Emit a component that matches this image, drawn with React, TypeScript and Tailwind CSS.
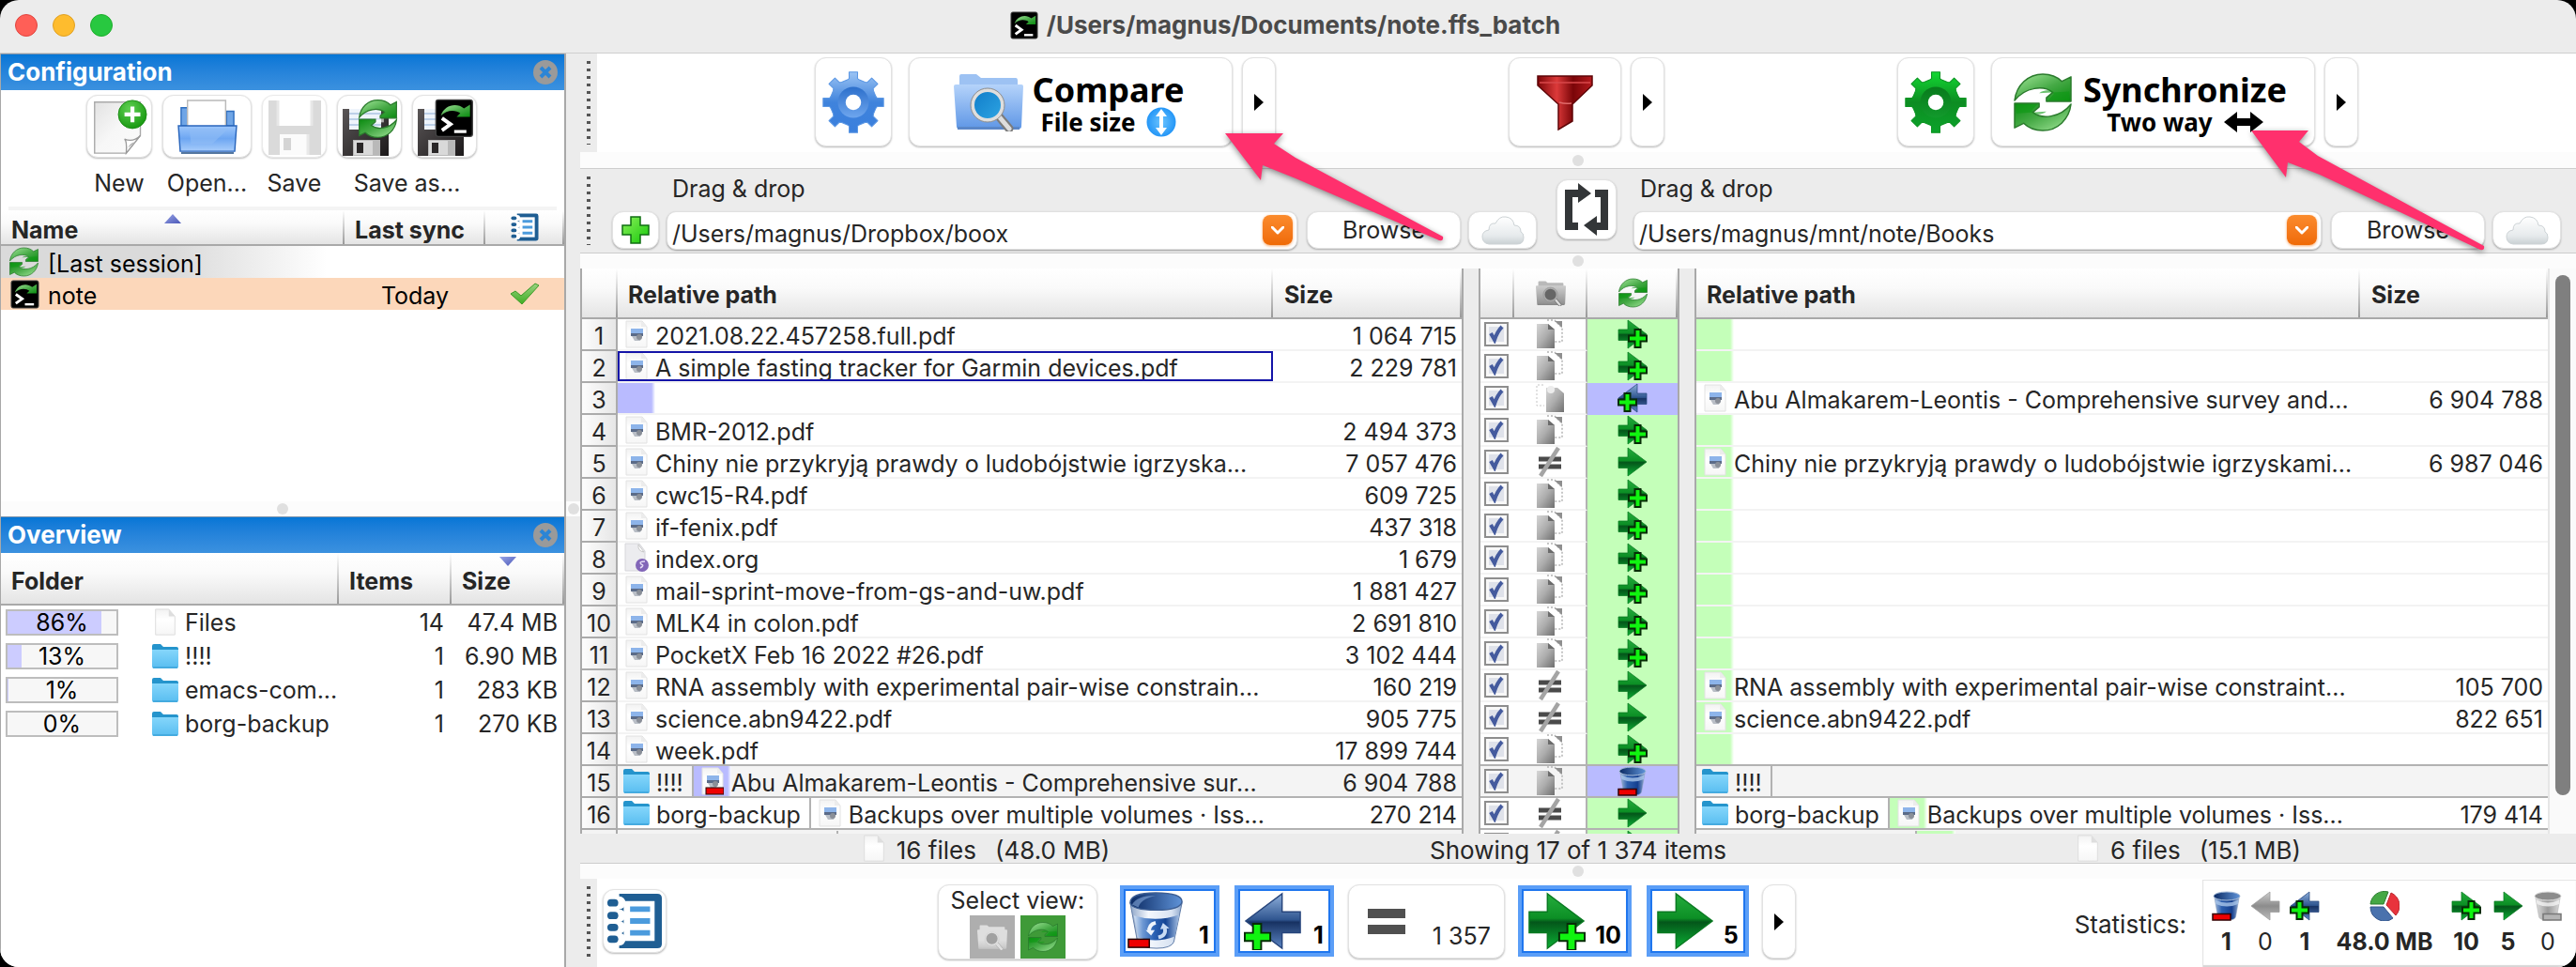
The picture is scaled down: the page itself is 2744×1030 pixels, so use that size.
import type { ReactNode } from "react";

/* ---------- icons ---------- */

function Defs() {
  return (
    <svg className="absolute h-0 w-0" aria-hidden="true">
      <defs>
        <linearGradient id="gBlueGear" x1="0" y1="0" x2="0" y2="1"><stop offset="0" stopColor="#9cc4f4" /><stop offset=".5" stopColor="#3f83dc" /><stop offset="1" stopColor="#3a7fdd" /></linearGradient>
        <linearGradient id="gBlueRing" x1="0" y1="0" x2="0" y2="1"><stop offset="0" stopColor="#2c6fcb" /><stop offset="1" stopColor="#6ea6ee" /></linearGradient>
        <linearGradient id="gGreenGear" x1="0" y1="0" x2="0" y2="1"><stop offset="0" stopColor="#12d832" /><stop offset=".5" stopColor="#0d8c22" /><stop offset="1" stopColor="#0ba32a" /></linearGradient>
        <linearGradient id="gGreenRing" x1="0" y1="0" x2="0" y2="1"><stop offset="0" stopColor="#087a1c" /><stop offset="1" stopColor="#129a2c" /></linearGradient>
        <linearGradient id="gSyncA" x1="0" y1="0" x2="1" y2="1"><stop offset="0" stopColor="#a5e89c" /><stop offset=".55" stopColor="#45a945" /><stop offset="1" stopColor="#0a8c10" /></linearGradient>
        <linearGradient id="gFolder" x1="0" y1="0" x2="0" y2="1"><stop offset="0" stopColor="#b5d3fa" /><stop offset="1" stopColor="#5f97e6" /></linearGradient>
        <linearGradient id="gFolderGrey" x1="0" y1="0" x2="0" y2="1"><stop offset="0" stopColor="#cdcdcd" /><stop offset="1" stopColor="#8f8f8f" /></linearGradient>
        <linearGradient id="gLens" x1="0" y1="0" x2="1" y2="1"><stop offset="0" stopColor="#0f7bc8" /><stop offset="1" stopColor="#2fa6e4" /></linearGradient>
        <linearGradient id="gFunnel" x1="0" y1="0" x2="1" y2="0"><stop offset="0" stopColor="#7d0508" /><stop offset=".35" stopColor="#dc3a3a" /><stop offset=".65" stopColor="#7a0508" /><stop offset="1" stopColor="#b51a1e" /></linearGradient>
        <linearGradient id="gArrow" x1="0" y1="0" x2="0" y2="1"><stop offset="0" stopColor="#25ad3d" /><stop offset=".45" stopColor="#0c8f25" /><stop offset=".52" stopColor="#04561a" /><stop offset="1" stopColor="#0bb034" /></linearGradient>
        <linearGradient id="gArrowBlue" x1="0" y1="0" x2="0" y2="1"><stop offset="0" stopColor="#8fb0dc" /><stop offset=".48" stopColor="#2f558f" /><stop offset=".52" stopColor="#173161" /><stop offset="1" stopColor="#5c86c4" /></linearGradient>
        <linearGradient id="gArrowGrey" x1="0" y1="0" x2="0" y2="1"><stop offset="0" stopColor="#cfcfcf" /><stop offset=".5" stopColor="#8c8c8c" /><stop offset="1" stopColor="#bcbcbc" /></linearGradient>
        <linearGradient id="gMacFolder" x1="0" y1="0" x2="0" y2="1"><stop offset="0" stopColor="#85d6fb" /><stop offset="1" stopColor="#58bdf0" /></linearGradient>
        <linearGradient id="gPaper" x1="0" y1="0" x2="0" y2="1"><stop offset="0" stopColor="#f2f2f2" /><stop offset=".4" stopColor="#ffffff" /><stop offset="1" stopColor="#f6f6f6" /></linearGradient>
        <linearGradient id="gGreyDoc" x1="0" y1="0" x2="1" y2="1"><stop offset="0" stopColor="#d6d6d6" /><stop offset=".5" stopColor="#adadad" /><stop offset="1" stopColor="#6f6f6f" /></linearGradient>
        <linearGradient id="gBin" x1="0" y1="0" x2="1" y2="0"><stop offset="0" stopColor="#a9bfdb" /><stop offset=".3" stopColor="#2d5fae" /><stop offset=".7" stopColor="#143f8f" /><stop offset="1" stopColor="#9fb6d6" /></linearGradient>
        <linearGradient id="gBinGlass" x1="0" y1="0" x2="1" y2="0"><stop offset="0" stopColor="#d3e1f2" /><stop offset=".2" stopColor="#6c97d3" /><stop offset=".45" stopColor="#2b62b4" /><stop offset=".7" stopColor="#154594" /><stop offset="1" stopColor="#a9c2e4" /></linearGradient>
        <linearGradient id="gBinRim" x1="0" y1="0" x2="1" y2="0"><stop offset="0" stopColor="#8fa6c8" /><stop offset=".35" stopColor="#f4f8fd" /><stop offset=".8" stopColor="#d8e3f2" /><stop offset="1" stopColor="#8ea7cc" /></linearGradient>
        <linearGradient id="gBinTop" x1="0" y1="0" x2="1" y2="0"><stop offset="0" stopColor="#0b2a63" /><stop offset="1" stopColor="#5f93d8" /></linearGradient>
        <linearGradient id="gBinGrey" x1="0" y1="0" x2="1" y2="0"><stop offset="0" stopColor="#e2e2e2" /><stop offset=".5" stopColor="#9a9a9a" /><stop offset="1" stopColor="#dedede" /></linearGradient>
        <linearGradient id="gCloud" x1="0" y1="0" x2="0" y2="1"><stop offset="0" stopColor="#ffffff" /><stop offset=".7" stopColor="#e6eaec" /><stop offset="1" stopColor="#c9d0d3" /></linearGradient>
        <linearGradient id="gOpen" x1="0" y1="0" x2="0" y2="1"><stop offset="0" stopColor="#9cc6fb" /><stop offset=".5" stopColor="#6da6f2" /><stop offset="1" stopColor="#a8cdfb" /></linearGradient>
        <linearGradient id="gDisk" x1="0" y1="0" x2="1" y2="1"><stop offset="0" stopColor="#5a5657" /><stop offset="1" stopColor="#1c191a" /></linearGradient>
        <linearGradient id="gSheet" x1="0" y1="0" x2="1" y2="1"><stop offset="0" stopColor="#e2e2e2" /><stop offset=".5" stopColor="#f7f7f7" /><stop offset="1" stopColor="#fbfbfb" /></linearGradient>
        <radialGradient id="gBadge" cx=".4" cy=".3" r=".8"><stop offset="0" stopColor="#5fd052" /><stop offset="1" stopColor="#0f9208" /></radialGradient>
        <radialGradient id="gInfo" cx=".5" cy=".5" r=".6"><stop offset="0" stopColor="#6cc4ff" /><stop offset="1" stopColor="#168df5" /></radialGradient>
        <linearGradient id="gPlus" x1="0" y1="0" x2="1" y2="1"><stop offset="0" stopColor="#8bf05a" /><stop offset="1" stopColor="#16c80a" /></linearGradient>
        <linearGradient id="gCheck" x1="0" y1="0" x2="0" y2="1"><stop offset="0" stopColor="#9ad283" /><stop offset="1" stopColor="#3fae22" /></linearGradient>
        <linearGradient id="gTri" x1="0" y1="0" x2="1" y2="1"><stop offset="0" stopColor="#9aa6e6" /><stop offset="1" stopColor="#4a57b8" /></linearGradient>
      </defs>
    </svg>
  );
}

function gearPath() {
  const pts: string[] = [];
  for (let i = 0; i < 8; i++) {
    const steps: [number, number][] = [[-15, 24], [-10, 25], [-8, 31.5], [8, 31.5], [10, 25], [15, 24]];
    for (const [deg, r] of steps) {
      const a = ((i * 45 + deg - 90) * Math.PI) / 180;
      pts.push(`${(32 + r * Math.cos(a)).toFixed(1)} ${(32 + r * Math.sin(a)).toFixed(1)}`);
    }
  }
  return `M${pts.join("L")}Z`;
}
const GEAR = gearPath();

function Gear({ green = false }: { green?: boolean }) {
  return (
    <svg viewBox="0 0 64 64" className="h-[66px] w-[66px]">
      <path d={GEAR} fill={green ? "url(#gGreenGear)" : "url(#gBlueGear)"} stroke={green ? "#0b9422" : "#5b97e4"} strokeWidth="1" strokeLinejoin="round" />
      <circle cx="32" cy="32" r="16" fill={green ? "url(#gGreenRing)" : "url(#gBlueRing)"} />
      <circle cx="32" cy="32" r="8" fill="#fff" />
    </svg>
  );
}

const SYNC_D = "M1 30C3 13 16 1 32 1C41 1 48 4 53 9L63 4V31H36V27L43 21C33 13 13 15 1 30Z";
function SyncIcon({ className }: { className: string }) {
  return (
    <svg viewBox="0 0 64 64" className={className}>
      <path d={SYNC_D} fill="url(#gSyncA)" stroke="#2a7a2c" strokeWidth="1.5" strokeLinejoin="round" />
      <path d="M28 22C36 16 44 20 44 23L38 30H61V20Z" fill="#0d9a14" opacity=".6" />
      <g transform="rotate(180 32 32)">
        <path d={SYNC_D} fill="url(#gSyncA)" stroke="#2a7a2c" strokeWidth="1.5" strokeLinejoin="round" />
        <path d="M28 22C36 16 44 20 44 23L38 30H61V20Z" fill="#0d9a14" opacity=".6" />
      </g>
    </svg>
  );
}

function TermGlyph() {
  return (
    <>
      <rect x="1" y="1" width="30" height="30" rx="2" fill="#000" stroke="#444" strokeWidth="1" />
      <path d="M5 14C8 5 18 3 24 8L29 5V15H18L21 12C17 9 10 9 5 14Z" fill="url(#gSyncA)" />
      <path d="M6 16L13 21L6 26" fill="none" stroke="#fff" strokeWidth="3" />
      <path d="M16 27H26" stroke="#fff" strokeWidth="2.5" />
    </>
  );
}
const TermIcon = ({ className }: { className: string }) => (
  <svg viewBox="0 0 32 32" className={className}><TermGlyph /></svg>
);

function FolderSearch({ className, grey = false }: { className: string; grey?: boolean }) {
  return (
    <svg viewBox="0 0 74 62" className={className}>
      <path d="M6 14V3Q6 1 8 1H24L29 5H66Q68 5 68 8V16Z" fill={grey ? "#b9b9b9" : "#9dc2f3"} />
      <path d="M0 14Q0 12 2 12H72Q74 12 74 14L72 57Q72 59 70 59H5Q3 59 3 57Z" fill={grey ? "url(#gFolderGrey)" : "url(#gFolder)"} />
      <rect x="4" y="57" width="66" height="3" fill={grey ? "#888" : "#5a87c8"} />
      <path d="M48 46L59 59" stroke="#7c7c7c" strokeWidth="9" strokeLinecap="round" />
      <path d="M48 46L59 59" stroke="#dedede" strokeWidth="5" strokeLinecap="round" />
      <circle cx="36" cy="34" r="16" fill={grey ? "#666" : "url(#gLens)"} stroke={grey ? "#aaa" : "#dedede"} strokeWidth="4" />
      <circle cx="36" cy="34" r="18" fill="none" stroke="#8d8d8d" strokeWidth="1" />
    </svg>
  );
}

const ARROW_D = "M2 22H22V2L62 32L22 62V45H2Z";
const BIG_PLUS = "M10 35h9v10h10v9h-10v10h-9v-10h-9v-9h9z";
const SMALL_PLUS = "M15 22h12v13h13v12h-13v13h-12v-13h-13v-12h13z";
type ArrowKind = "green" | "blue" | "grey";
function Arrow({ kind = "green", plus = false, small = false, className }: { kind?: ArrowKind; plus?: boolean; small?: boolean; className: string }) {
  const fill = kind === "green" ? "url(#gArrow)" : kind === "blue" ? "url(#gArrowBlue)" : "url(#gArrowGrey)";
  const stroke = kind === "green" ? "#0a7a22" : kind === "blue" ? "#27457c" : "#999";
  const x = kind === "blue" ? 0 : small ? 22 : 34;
  return (
    <svg viewBox="0 0 64 64" className={className}>
      <path d={ARROW_D} fill={fill} stroke={stroke} strokeWidth="1.5" transform={kind === "green" ? undefined : "matrix(-1 0 0 1 64 0)"} />
      {plus && <path d={small ? SMALL_PLUS : BIG_PLUS} transform={`translate(${x} 0)`} fill="#10f410" stroke="#062c06" strokeWidth={small ? 4 : 2} />}
    </svg>
  );
}

function Bin({ className }: { className: string }) {
  return (
    <svg viewBox="0 0 64 64" className={className}>
      <path d="M3 12L11 55Q15 62 32 62Q48 62 51 55L60 12Z" fill="url(#gBinRim)" stroke="#5f7ba6" strokeWidth="1" />
      <path d="M7 26Q32 34 57 25L52 49Q32 57 12 50Z" fill="url(#gBinGlass)" />
      <path d="M3 12Q3 1 31 1Q60 1 60 11Q58 20 32 20Q5 20 3 12Z" fill="url(#gBinTop)" stroke="#3d5f94" strokeWidth="1.5" />
      <path d="M5 14Q10 4 31 4Q14 8 12 17Z" fill="#8fb2e2" opacity=".55" />
      <path d="M31 34Q23 36 24 44" stroke="#eef4fc" strokeWidth="4" fill="none" />
      <path d="M20 42L30 42L26 48Z" fill="#eef4fc" />
      <path d="M34 50Q43 48 41 40" stroke="#c8dbf3" strokeWidth="4" fill="none" />
      <path d="M36 41L46 40L39 34Z" fill="#c8dbf3" />
      <rect x="1" y="52" width="23" height="9" fill="#ee0000" stroke="#200" strokeWidth="1.5" />
    </svg>
  );
}

function SmallBin({ grey = false, className = "" }: { grey?: boolean; className?: string }) {
  return (
    <svg viewBox="0 0 64 64" className={`h-[32px] w-[32px] ${className}`}>
      <path d="M5 10L13 55Q14 62 32 62Q50 62 51 55L59 10Z" fill={grey ? "url(#gBinGrey)" : "url(#gBin)"} stroke={grey ? "#aaaaaa" : "#8499b5"} strokeWidth="1" />
      <path d="M7 19Q32 31 57 19L56 28Q32 38 9 28Z" fill={grey ? "#f2f2f2" : "#a9c6ea"} opacity=".8" />
      <ellipse cx="32" cy="11" rx="28" ry="9" fill={grey ? "#8c8c8c" : "url(#gBinTop)"} stroke={grey ? "#ddd" : "#a7bcd8"} strokeWidth="2" />
      <rect x={grey ? 22 : 2} y="49" width="38" height="13" fill={grey ? "#b4b4b4" : "#ee0000"} stroke={grey ? "#777" : "#300"} strokeWidth="3" />
    </svg>
  );
}

function MacFolder() {
  return (
    <svg viewBox="0 0 28 28" className="h-[28px] w-[28px] shrink-0">
      <path d="M0 3Q0 1 2 1H9L12 4H26Q28 4 28 6V12H0Z" fill="#2594cc" />
      <path d="M0 7H28V25Q28 27 26 27H2Q0 27 0 25Z" fill="url(#gMacFolder)" />
      <path d="M1 26H27" stroke="#3ea4da" strokeWidth="1.5" />
    </svg>
  );
}

function BlankDoc({ className }: { className: string }) {
  return (
    <svg viewBox="0 0 24 32" className={className}>
      <path d="M1 1H16L23 9V30H1Z" fill="url(#gPaper)" stroke="#dcdcdc" strokeWidth="1" />
      <path d="M16 1V9H23Z" fill="#dedede" />
    </svg>
  );
}

function PdfDoc({ minus = false }: { minus?: boolean }) {
  return (
    <svg viewBox="0 0 24 30" className="h-[30px] w-[24px]">
      <path d="M1 1H18L23 7V29H1Z" fill="url(#gPaper)" stroke="#e2e2e2" strokeWidth="1" />
      <path d="M17 1V7H23" fill="#ececec" />
      <rect x="6" y="9" width="13" height="7" fill="#8db4ea" />
      <rect x="6" y="14" width="13" height="3" fill="#5b6b88" />
      <path d="M7 17H18L16 22H10Z" fill="#b9bec6" />
      <circle cx="15" cy="18" r="3" fill="#8a8f98" />
      {minus && <rect x="5" y="22" width="19" height="7" fill="#ee0000" stroke="#200" />}
    </svg>
  );
}

function OrgDoc() {
  return (
    <svg viewBox="0 0 26 32" className="h-[32px] w-[26px]">
      <path d="M1 1H16L22 9V30H1Z" fill="#ececef" stroke="#d6d6da" />
      <path d="M15 2Q14 9 21 10Z" fill="#fff" stroke="#c8c8c8" />
      <circle cx="19" cy="24" r="7" fill="#8266b8" />
      <path d="M22 20Q15 20 18 23Q22 24 17 27" stroke="#e4daf4" strokeWidth="1.5" fill="none" />
    </svg>
  );
}

function Notebook({ className }: { className: string }) {
  return (
    <svg viewBox="0 0 62 62" className={className}>
      <path d="M14 1H56Q61 1 61 6V56Q61 61 56 61H14Z" fill="#1f5e93" />
      <path d="M19 9H53V53H19Z" fill="#fff" />
      <path d="M26 18H48M26 31H48M26 44H48" stroke="#4b9bdd" strokeWidth="6" />
      {[11, 25, 38, 51].map((y) => (
        <g key={y}><circle cx="14" cy={y} r="7" fill="#fff" /><rect x="1" y={y - 4} width="12" height="8" rx="4" fill="#1f5e93" /></g>
      ))}
    </svg>
  );
}

function Cloud() {
  return (
    <svg viewBox="0 0 46 32" className="h-[32px] w-[46px]">
      <path d="M8 31Q1 30 1 23Q1 17 8 16Q8 8 15 9Q19 1 26 2Q34 3 35 11Q42 11 42 18Q45 19 45 24Q45 31 38 31Z" fill="url(#gCloud)" stroke="#ccd2d5" strokeWidth="1" />
    </svg>
  );
}

function NewIcon() {
  return (
    <svg viewBox="0 0 64 64" className="h-[64px] w-[60px]">
      <path d="M4 4H56V42L40 62H4Z" fill="url(#gSheet)" stroke="#a9a9a9" strokeWidth="1.5" />
      <path d="M40 62Q41 48 38 46Q48 50 56 42Z" fill="#fff" stroke="#9a9a9a" strokeWidth="1.5" />
      <path d="M42 56Q44 50 51 49Z" fill="#b5b5b5" />
      <circle cx="47" cy="18" r="16" fill="url(#gBadge)" stroke="#1b8a14" strokeWidth="1" />
      <path d="M47 9V27M38 18H56" stroke="#fff" strokeWidth="4.5" />
    </svg>
  );
}

function OpenIcon() {
  return (
    <svg viewBox="0 0 66 62" className="h-[60px] w-[64px]">
      <path d="M4 30V10H12V30ZM54 30V14H62V30Z" fill="#6fa5e6" stroke="#2f6fc0" strokeWidth="1.5" />
      <path d="M11 2H53V36H11Z" fill="#fff" stroke="#b9b9b9" strokeWidth="1.5" />
      <path d="M1 30H65L63 58H3Z" fill="url(#gOpen)" stroke="#2a66bc" strokeWidth="1.5" />
      <path d="M13 33H56L38 50H15Z" fill="#8fbcf5" opacity=".6" />
      <path d="M4 60H62" stroke="#55779f" strokeWidth="2" />
    </svg>
  );
}

function Floppy({ faded = false, badge }: { faded?: boolean; badge?: "sync" | "term" }) {
  const body = faded ? "#cbcbcb" : "url(#gDisk)";
  return (
    <svg viewBox="0 0 62 62" className="h-[62px] w-[62px]">
      {faded ? (
        <>
          <path d="M3 3H59V61H3Z" fill={body} />
          <path d="M13 3H49V30H13Z" fill="#fff" />
          <path d="M13 3V30M49 3V30" stroke="#dedede" strokeWidth="3" />
          <path d="M15 39H45V61H15Z" fill="#fafafa" />
          <path d="M45 39V61" stroke="#e0e0e0" strokeWidth="3" />
          <rect x="19" y="43" width="8" height="13" fill="#c2c2c2" />
        </>
      ) : (
        <>
          <path d="M2 12H51V62H2Z" fill={body} />
          <path d="M9 12H43V34H9Z" fill="#eef4fb" />
          <path d="M9 17H43M9 23H43M9 29H43" stroke="#bcd0e8" strokeWidth="2" />
          <path d="M13 45H42V62H13Z" fill="#b9b9b9" />
          <path d="M14 46H34V61H14Z" fill="#d9d9d9" />
          <rect x="17" y="48" width="7" height="11" fill="#2a2728" />
        </>
      )}
      {badge === "sync" && (
        <g transform="translate(19 2) scale(.64)">
          <path d={SYNC_D} fill="url(#gSyncA)" stroke="#2a7a2c" strokeWidth="2" />
          <path d="M22 32H42V38H22Z" fill="#fff" opacity=".6" />
          <path d={SYNC_D} fill="url(#gSyncA)" stroke="#2a7a2c" strokeWidth="2" transform="rotate(180 32 32)" />
        </g>
      )}
      {badge === "term" && <g transform="translate(20 1) scale(1.3)"><TermGlyph /></g>}
    </svg>
  );
}

function Funnel() {
  return (
    <svg viewBox="0 0 60 60" className="h-[60px] w-[60px]">
      <path d="M1 2H59V12L38 32V50L23 59V32L1 12Z" fill="url(#gFunnel)" stroke="#5e0507" strokeWidth="1.5" />
      <path d="M3 9H57" stroke="#d8494b" strokeWidth="1.5" />
      <path d="M24 30Q30 32 37 31" stroke="#e06a6a" strokeWidth="1.5" fill="none" />
    </svg>
  );
}

function Swap() {
  return (
    <svg viewBox="0 0 50 56" className="h-[56px] w-[50px]">
      <path d="M20 11H6V46H16M28 46H44V11H34" fill="none" stroke="#333638" strokeWidth="8" />
      <path d="M16 0L30 11L16 21ZM36 56L22 45L36 35Z" fill="#333638" />
    </svg>
  );
}

function Pie() {
  return (
    <svg viewBox="0 0 32 32" className="h-[32px] w-[32px]">
      <path d="M15 14L1 14A15 15 0 0 1 20 1Z" fill="#45a845" stroke="#2b7d2f" />
      <path d="M18 15L23 2A15 15 0 0 1 28 26Z" fill="#e8333c" stroke="#b9262d" />
      <path d="M15 17L25 29A15 15 0 0 1 1 17Z" fill="#4a72ad" stroke="#35558a" />
    </svg>
  );
}

function CopyCat({ right = false }: { right?: boolean }) {
  return (
    <svg viewBox="0 0 30 32" className="h-[32px] w-[30px]">
      {right ? (
        <>
          <path d="M8 2H1V24H9" fill="none" stroke="#c4c4c4" strokeDasharray="2 2" />
          <path d="M11 5H23L30 11V31H11Z" fill="url(#gGreyDoc)" />
          <circle cx="16" cy="7" r="4" fill="#ececec" />
        </>
      ) : (
        <>
          <path d="M12 1H20L28 9V24H20" fill="none" stroke="#b4b4b4" strokeDasharray="2 2" strokeWidth="1.5" />
          <path d="M20 2H28V9Z" fill="#8f8f8f" />
          <path d="M1 5H13L20 11V31H1Z" fill="url(#gGreyDoc)" />
          <path d="M13 5V11H20Z" fill="#6b6b6b" />
        </>
      )}
    </svg>
  );
}

const NotEqual = () => (
  <svg viewBox="0 0 26 32" className="h-[32px] w-[26px]">
    <path d="M1 13H25M1 21H25" stroke="#4a4a4a" strokeWidth="5" />
    <path d="M3 31L22 1" stroke="#a4a4a4" strokeWidth="4.5" />
  </svg>
);

const Play = () => (
  <svg viewBox="0 0 10 18" className="h-[18px] w-[10px]"><path d="M0 0L10 9L0 18Z" fill="#000" /></svg>
);

function CloseButton({ label }: { label: string }) {
  return (
    <button aria-label={label} className="mr-[7px]">
      <svg viewBox="0 0 26 26" className="h-[26px] w-[26px]">
        <circle cx="13" cy="13" r="13" fill="#9a9a9a" />
        <path d="M8 8L18 18M18 8L8 18" stroke="#2b85d6" strokeWidth="4" />
      </svg>
    </button>
  );
}

const PINK_SHORT = "M1 1H63L53 12L76 27L233 111Q234 116 229 115L76 49L41 35L39 51Z";
const PINK_LONG = "M1 1H62L52 13L72 28L249 124Q250 129 245 128L74 48L40 35L38 51Z";

function PinkArrow({ d, className }: { d: string; className: string }) {
  return (
    <svg viewBox="0 0 252 134" className={`pointer-events-none absolute z-10 h-[134px] w-[252px] drop-shadow-[0_2px_3px_rgba(0,0,0,0.45)] ${className}`}>
      <path d={d} fill="#ff306d" />
    </svg>
  );
}

/* ---------- shared pieces ---------- */

const BTN_BASE = "flex items-center rounded-[12px] border border-[#e2e2e2] bg-white shadow-[0_1px_2px_rgba(0,0,0,0.28)]";
const BTN = `${BTN_BASE} justify-center`;
const TH = "h-[54px] border-b-2 border-[#a9a9a9] bg-[image:linear-gradient(#ffffff,#999999),linear-gradient(#ffffff,#fafafa_40%,#e4e4e4)] bg-[length:2px_100%,100%_100%] bg-[position:right,left] bg-no-repeat p-0 text-left font-bold";

function Sash({ line = false }: { line?: boolean }) {
  return (
    <div className={`flex shrink-0 items-center justify-center border-[#cdcdcd] bg-[#fcfcfc] ${line ? "h-[18px] border-b" : "h-[16px]"}`}>
      <span className="h-[12px] w-[12px] rounded-full bg-[#e0e0e0]" />
    </div>
  );
}

function Grip() {
  return (
    <div className="flex w-[18px] shrink-0 items-center justify-center bg-[#ececec] py-2">
      <span className="h-full w-[4px] bg-[image:repeating-linear-gradient(#555_0_3px,#ececec_3px_8px)]" />
    </div>
  );
}

function PanelTitle({ children }: { children: string }) {
  return (
    <div className="flex h-[39px] shrink-0 items-center justify-between border-t border-[#7f94ab] bg-linear-to-b from-[#0476d6] to-[#3b91df] pl-[7px]">
      <h2 className="text-[26px] leading-none font-bold text-white">{children}</h2>
      <CloseButton label={`Close ${children}`} />
    </div>
  );
}

/* ---------- left column ---------- */

function ConfigPanel() {
  return (
    <section className="flex h-[477px] flex-col bg-white">
      <PanelTitle>Configuration</PanelTitle>
      <div className="flex justify-center gap-[11px] pt-[5px] pr-[2px] text-center">
        <div className="w-[70px]">
          <button aria-labelledby="cfg-new" className={`${BTN} h-[67px] w-[70px]`}><NewIcon /></button>
          <p id="cfg-new" className="mt-[10px] leading-[34px]">New</p>
        </div>
        <div className="w-[95px]">
          <button aria-labelledby="cfg-open" className={`${BTN} h-[67px] w-[95px]`}><OpenIcon /></button>
          <p id="cfg-open" className="mt-[10px] leading-[34px]">Open...</p>
        </div>
        <div className="w-[69px]">
          <button aria-labelledby="cfg-save" className={`${BTN} h-[67px] w-[69px] opacity-70`}><Floppy faded /></button>
          <p id="cfg-save" className="mt-[10px] leading-[34px]">Save</p>
        </div>
        <div>
          <div className="flex gap-[11px]">
            <button aria-label="Save as" className={`${BTN} h-[67px] w-[69px]`}><Floppy badge="sync" /></button>
            <button aria-label="Save as batch job" className={`${BTN} h-[67px] w-[69px]`}><Floppy badge="term" /></button>
          </div>
          <p className="mt-[10px] leading-[34px]">Save as...</p>
        </div>
      </div>
      <div className="mx-2 mt-[8px] h-[4px] bg-[#f4f4f4]" />
      <table className="w-full table-fixed border-separate border-spacing-0 leading-[28px]">
        <colgroup><col /><col className="w-[150px]" /><col className="w-[84px]" /></colgroup>
        <thead>
          <tr>
            <th className={`${TH} relative h-[38px]! pt-[6px]! pl-[11px]!`}>
              Name
              <svg viewBox="0 0 18 10" className="absolute top-[4px] left-1/2 h-[10px] w-[18px] -translate-x-1/2"><path d="M9 0L18 10H0Z" fill="url(#gTri)" /></svg>
            </th>
            <th className={`${TH} h-[38px]! pt-[6px]! pl-[11px]! whitespace-nowrap`}>Last sync</th>
            <th className={`${TH} h-[38px]!`} aria-label="Log"><Notebook className="mx-auto h-[30px] w-[32px]" /></th>
          </tr>
        </thead>
        <tbody className="text-black">
          <tr className="h-[34px]">
            <td className="bg-linear-to-r from-[#dadada] from-50% to-white to-95% p-0">
              <span className="flex items-center gap-[10px] pl-[9px]"><SyncIcon className="h-[32px] w-[31px]" /><span className="pt-[3px]">[Last session]</span></span>
            </td>
            <td /><td />
          </tr>
          <tr className="h-[34px] bg-[#fcd7ba]">
            <td className="p-0"><span className="flex items-center gap-[9px] pl-[10px]"><TermIcon className="h-[31px] w-[31px]" /><span className="pt-[3px]">note</span></span></td>
            <td className="p-0 pt-[3px] text-center">Today</td>
            <td className="p-0">
              <svg viewBox="0 0 32 24" className="mx-auto h-[24px] w-[32px]"><path d="M1 12L6 9L12 14L27 1L31 3L13 23Z" fill="url(#gCheck)" stroke="#3c9a26" /></svg>
            </td>
          </tr>
        </tbody>
      </table>
    </section>
  );
}

const overview = [
  { pct: 86, name: "Files", items: "14", size: "47.4 MB" },
  { pct: 13, name: "!!!!", items: "1", size: "6.90 MB" },
  { pct: 1, name: "emacs-com...", items: "1", size: "283 KB" },
  { pct: 0, name: "borg-backup", items: "1", size: "270 KB" },
];

function OverviewPanel() {
  return (
    <section className="flex-1 bg-white">
      <PanelTitle>Overview</PanelTitle>
      <table className="w-full table-fixed border-separate border-spacing-0">
        <colgroup><col /><col className="w-[120px]" /><col className="w-[120px]" /></colgroup>
        <thead>
          <tr>
            <th className={`${TH} h-[56px]! pt-[6px]! pl-[11px]!`}>Folder</th>
            <th className={`${TH} h-[56px]! pt-[6px]! pl-[11px]!`}>Items</th>
            <th className={`${TH} relative h-[56px]! pt-[6px]! pl-[11px]!`}>
              Size
              <svg viewBox="0 0 18 10" className="absolute top-[4px] left-1/2 h-[10px] w-[18px] -translate-x-1/2"><path d="M0 0H18L9 10Z" fill="url(#gTri)" /></svg>
            </th>
          </tr>
        </thead>
        <tbody>
          {overview.map((r) => (
            <tr key={r.name} className="h-[36px]">
              <td className="p-0">
                <span className="flex items-center">
                  <span className="relative ml-[5px] block h-[28px] w-[120px] border-2 border-[#bdbdbd] bg-[#f7f7f7]">
                    <span className="block h-full bg-[#ccccff]" style={{ width: `${r.pct}%` }} />
                    <span className="absolute inset-0 flex items-center justify-center text-black">{r.pct}%</span>
                  </span>
                  <span className="ml-[36px] flex w-[28px] justify-center">{r.name === "Files" ? <BlankDoc className="h-[30px] w-[24px]" /> : <MacFolder />}</span>
                  <span className="ml-[7px] whitespace-nowrap">{r.name}</span>
                </span>
              </td>
              <td className="p-0 pr-[8px] text-right">{r.items}</td>
              <td className="p-0 pr-[7px] text-right whitespace-nowrap">{r.size}</td>
            </tr>
          ))}
        </tbody>
      </table>
    </section>
  );
}

/* ---------- toolbar ---------- */

function Toolbar() {
  return (
    <div className="flex h-[105px] shrink-0 bg-white">
      <Grip />
      <div className="flex flex-1 items-start justify-evenly pt-[4px]">
        <div className="flex">
          <button aria-label="Comparison settings" className={`${BTN} h-[95px] w-[82px]`}><Gear /></button>
          <div className="relative ml-[18px]">
            <button className={`${BTN} h-[95px] w-[345px] gap-[10px] pr-[4px]`}>
              <FolderSearch className="h-[62px] w-[74px]" />
              <span className="pt-[5px] font-['Noto_Sans'] font-bold text-black">
                <span className="block text-[36px] leading-[37px]">Compare</span>
                <span className="flex items-center justify-center gap-[11px] text-[26px] leading-[32px]">
                  File size
                  <svg viewBox="0 0 32 32" className="h-[32px] w-[32px]"><circle cx="16" cy="16" r="15.500" fill="url(#gInfo)" /><path d="M16 2L22 10H18V22H22L16 30L10 22H14V10H10Z" fill="#fff" /></svg>
                </span>
              </span>
            </button>
            <PinkArrow d={PINK_SHORT} className="top-[80px] left-[336px]" />
          </div>
          <button aria-label="Comparison options" className={`${BTN} ml-[10px] h-[95px] w-[36px]`}><Play /></button>
        </div>
        <div className="mx-4 flex gap-[10px]">
          <button aria-label="Filter" className={`${BTN} h-[95px] w-[120px]`}><Funnel /></button>
          <button aria-label="Filter options" className={`${BTN} h-[95px] w-[36px]`}><Play /></button>
        </div>
        <div className="flex">
          <button aria-label="Synchronization settings" className={`${BTN} h-[95px] w-[82px]`}><Gear green /></button>
          <div className="relative ml-[18px]">
            <button className={`${BTN} h-[95px] w-[345px] gap-[12px] pr-[6px]`}>
              <SyncIcon className="h-[62px] w-[62px]" />
              <span className="pt-[5px] font-['Noto_Sans'] font-bold text-black">
                <span className="block text-[36px] leading-[37px]">Synchronize</span>
                <span className="flex items-center justify-center gap-[12px] text-[26px] leading-[32px]">
                  Two way
                  <svg viewBox="0 0 42 22" className="h-[22px] w-[42px]"><path d="M0 11L14 0V7H28V0L42 11L28 22V15H14V22Z" fill="#000" /></svg>
                </span>
              </span>
            </button>
            <PinkArrow d={PINK_LONG} className="top-[77px] left-[276px]" />
          </div>
          <button aria-label="Synchronization options" className={`${BTN} ml-[10px] h-[95px] w-[36px]`}><Play /></button>
        </div>
      </div>
    </div>
  );
}

function FolderSide({ value, side, withAdd = false }: { value: string; side: string; withAdd?: boolean }) {
  return (
    <div className="flex min-w-0 flex-col">
      <label htmlFor={`path-${side}`} className={`leading-[42px] ${withAdd ? "ml-[80px]" : "ml-[20px]"}`}>Drag &amp; drop</label>
      <div className="flex h-[46px] items-center">
        {withAdd && (
          <button aria-label="Add folder pair" className={`${BTN} ml-[16px] h-[40px] w-[50px]`}>
            <svg viewBox="0 0 30 30" className="h-[30px] w-[30px]"><path d="M10 1H20V10H29V20H20V29H10V20H1V10H10Z" fill="url(#gPlus)" stroke="#0f6e12" strokeWidth="1.5" /></svg>
          </button>
        )}
        <div className={`flex h-[41px] flex-1 items-center rounded-[10px] border border-[#e0e0e0] bg-white pr-[4px] shadow-[0_1px_2px_rgba(0,0,0,0.35)] ${withAdd ? "ml-[8px]" : "ml-[13px]"}`}>
          <input id={`path-${side}`} defaultValue={value} className="h-full min-w-0 flex-1 bg-transparent pt-[7px] pl-[5px] outline-none" />
          <button aria-label={`Recent ${side} folders`} className="flex h-[32px] w-[32px] items-center justify-center rounded-[8px] bg-linear-to-b from-[#fb8b2c] to-[#ef6a05] shadow-[0_1px_3px_rgba(240,110,10,0.6)]">
            <svg viewBox="0 0 14 9" className="h-[9px] w-[14px]"><path d="M1 1L7 7L13 1" fill="none" stroke="#fff" strokeWidth="3" strokeLinecap="round" strokeLinejoin="round" /></svg>
          </button>
        </div>
        <button className={`${BTN} ml-[10px] h-[40px] w-[164px]`}>Browse</button>
        <button aria-label={`Cloud storage ${side}`} className={`${BTN} mr-[16px] ml-[8px] h-[40px] w-[73px]`}><Cloud /></button>
      </div>
    </div>
  );
}

function FolderBar() {
  return (
    <div className="flex h-[90px] shrink-0 border-b border-[#cdcdcd] bg-[#ececec]">
      <Grip />
      <div className="grid flex-1 grid-cols-[1fr_auto_1fr]">
        <FolderSide side="left" value="/Users/magnus/Dropbox/boox" withAdd />
        <button aria-label="Swap sides" className={`${BTN} mx-[5px] mt-[11px] h-[64px] w-[64px]`}><Swap /></button>
        <FolderSide side="right" value="/Users/magnus/mnt/note/Books" />
      </div>
    </div>
  );
}

/* ---------- file grid ---------- */

type Tone = "create" | "update" | "left" | "delete";
interface Row { n: string; folder?: string; left?: string; lsize?: string; right?: string; rsize?: string; tone: Tone; org?: boolean }

const rows: Row[] = [
  { n: "1", left: "2021.08.22.457258.full.pdf", lsize: "1 064 715", tone: "create" },
  { n: "2", left: "A simple fasting tracker for Garmin devices.pdf", lsize: "2 229 781", tone: "create" },
  { n: "3", right: "Abu Almakarem-Leontis - Comprehensive survey and...", rsize: "6 904 788", tone: "left" },
  { n: "4", left: "BMR-2012.pdf", lsize: "2 494 373", tone: "create" },
  { n: "5", left: "Chiny nie przykryją prawdy o ludobójstwie igrzyska...", lsize: "7 057 476", right: "Chiny nie przykryją prawdy o ludobójstwie igrzyskami...", rsize: "6 987 046", tone: "update" },
  { n: "6", left: "cwc15-R4.pdf", lsize: "609 725", tone: "create" },
  { n: "7", left: "if-fenix.pdf", lsize: "437 318", tone: "create" },
  { n: "8", left: "index.org", lsize: "1 679", tone: "create", org: true },
  { n: "9", left: "mail-sprint-move-from-gs-and-uw.pdf", lsize: "1 881 427", tone: "create" },
  { n: "10", left: "MLK4 in colon.pdf", lsize: "2 691 810", tone: "create" },
  { n: "11", left: "PocketX Feb 16 2022 #26.pdf", lsize: "3 102 444", tone: "create" },
  { n: "12", left: "RNA assembly with experimental pair-wise constrain...", lsize: "160 219", right: "RNA assembly with experimental pair-wise constraint...", rsize: "105 700", tone: "update" },
  { n: "13", left: "science.abn9422.pdf", lsize: "905 775", right: "science.abn9422.pdf", rsize: "822 651", tone: "update" },
  { n: "14", left: "week.pdf", lsize: "17 899 744", tone: "create" },
  { n: "15", folder: "!!!!", left: "Abu Almakarem-Leontis - Comprehensive sur...", lsize: "6 904 788", tone: "delete" },
  { n: "16", folder: "borg-backup", left: "Backups over multiple volumes · Iss...", lsize: "270 214", right: "Backups over multiple volumes · Iss...", rsize: "179 414", tone: "update" },
];

const strong = (i: number) => i >= 13;
const lineOf = (i: number) => (strong(i) ? "border-b-2 border-[#b2b2b2]" : "border-b-2 border-[#f3f3f3]");
const rowBg = (i: number) => (i === 14 ? "bg-[#f4f4f4]" : "bg-white");

const GREEN_BOX = "bg-linear-to-r from-[#c4ffb9] from-90% to-white";
const BLUE_BOX = "bg-linear-to-r from-[#b9bbff] from-90% to-white";

function PathCell({ row, side, focus = false }: { row: Row; side: "left" | "right"; focus?: boolean }) {
  const name = side === "left" ? row.left : row.right;
  let box = "";
  if (side === "left" && (row.tone === "left" || row.tone === "delete")) box = BLUE_BOX;
  if (side === "right" && (row.tone === "create" || row.tone === "update")) box = GREEN_BOX;
  let icon: ReactNode = null;
  if (name) icon = row.org ? <OrgDoc /> : <PdfDoc minus={side === "left" && row.tone === "delete"} />;
  const showFile = !(row.folder && !name);
  return (
    <span className={`flex h-[32px] items-center overflow-hidden whitespace-nowrap ${focus ? "outline-2 -outline-offset-2 outline-[#1414a8]" : ""}`}>
      {row.folder && (
        <span className="flex h-full shrink-0 items-center gap-[7px] border-r-2 border-[#b2b2b2] pr-[9px] pl-[6px]"><MacFolder /><span className="pt-[5px]">{row.folder}</span></span>
      )}
      {showFile && <span className={`flex h-full w-[40px] shrink-0 items-center justify-center ${box}`}>{icon}</span>}
      <span className="pt-[5px]">{name}</span>
    </span>
  );
}

function SideTable({ side }: { side: "left" | "right" }) {
  const left = side === "left";
  return (
    <table className="w-full table-fixed border-separate border-spacing-0 leading-[27px]">
      <colgroup>{left && <col className="w-[38px]" />}<col /><col className={left ? "w-[201px]" : "w-[200px]"} /></colgroup>
      <thead>
        <tr>
          {left && <th className={TH} aria-label="Row" />}
          <th className={`${TH} pt-[5px]! pl-[11px]!`}>Relative path</th>
          <th className={`${TH} pt-[5px]! pl-[12px]!`}>Size</th>
        </tr>
      </thead>
      <tbody>
        {rows.map((r, i) => (
          <tr key={r.n} className={`h-[34px] ${rowBg(i)}`}>
            {left && <th scope="row" className="border-r-2 border-b-2 border-[#ababab] bg-linear-to-r from-[#fdfdfd] to-[#e6e6e6] p-0 pt-[5px] text-center font-normal">{r.n}</th>}
            <td className={`${lineOf(i)} p-0`}><PathCell row={r} side={side} focus={left && i === 1} /></td>
            <td className={`${lineOf(i)} p-0 pt-[5px] pr-[5px] text-right whitespace-nowrap`}>{left ? r.lsize : r.rsize}</td>
          </tr>
        ))}
        <tr className="h-[34px] bg-[#f4f4f4]">
          {left && <td className="border-r-2 border-[#ababab]" />}
          <td className="p-0">
            <span className="flex h-[32px]">
              <span className="w-[235px] border-r-2 border-[#b2b2b2] pt-[3px] pl-[6px]"><MacFolder /></span>
              {!left && <span className={`w-[41px] ${GREEN_BOX}`} />}
            </span>
          </td>
          <td />
        </tr>
      </tbody>
    </table>
  );
}

function ActionIcon({ tone }: { tone: Tone }) {
  if (tone === "delete") return <SmallBin className="mx-auto" />;
  if (tone === "left") return <Arrow kind="blue" plus small className="mx-auto h-[32px] w-[32px]" />;
  return <Arrow plus={tone === "create"} small className="mx-auto h-[32px] w-[32px]" />;
}

function SyncCheck({ label }: { label: string }) {
  return (
    <label className="mr-auto ml-[4px] grid h-[26px] w-[26px] place-items-center">
      <input type="checkbox" defaultChecked aria-label={label} className="peer col-start-1 row-start-1 h-[26px] w-[26px] appearance-none border-2 border-[#8e8e8e] bg-[#dfe2ea] shadow-[inset_0_0_0_3px_#f8f8f8]" />
      <svg viewBox="0 0 18 20" className="pointer-events-none col-start-1 row-start-1 hidden h-[20px] w-[18px] peer-checked:block"><path d="M3 9L7 16Q10 7 15 2" fill="none" stroke="#455b9e" strokeWidth="4" /></svg>
    </label>
  );
}

function MiddleTable() {
  const all = [...rows, { n: "17", tone: "update" as Tone }];
  return (
    <table className="w-full table-fixed border-separate border-spacing-0">
      <colgroup><col className="w-[36px]" /><col className="w-[78px]" /><col /></colgroup>
      <thead>
        <tr>
          <th className={TH} aria-label="Include" />
          <th className={TH} aria-label="Category"><FolderSearch grey className="mx-auto h-[27px] w-[32px]" /></th>
          <th className={TH} aria-label="Action"><SyncIcon className="mx-auto h-[32px] w-[31px]" /></th>
        </tr>
      </thead>
      <tbody>
        {all.map((r, i) => {
          const blue = r.tone === "left" || r.tone === "delete";
          return (
            <tr key={r.n} className={`h-[34px] ${rowBg(i)}`}>
              <td className={`${lineOf(i)} p-0`}><SyncCheck label={`Include row ${r.n}`} /></td>
              <td className={`${lineOf(i)} border-r-2 border-r-[#b2b2b2] p-0`}>
                <span className="flex justify-center">{r.tone === "update" ? <NotEqual /> : <CopyCat right={r.tone === "left"} />}</span>
              </td>
              <td className={`border-b-2 p-0 ${blue ? "bg-[#b9bbff]" : "bg-[#c4ffb9]"} ${strong(i) ? "border-[#b2b2b2]" : blue ? "border-[#b9bbff]" : "border-[#c4ffb9]"}`}>
                <ActionIcon tone={r.tone} />
              </td>
            </tr>
          );
        })}
      </tbody>
    </table>
  );
}

function FileGrid() {
  return (
    <div className="flex min-h-0 flex-1 gap-[16px] overflow-hidden bg-[#ececec]">
      <div className="min-w-0 flex-1 overflow-hidden border-x-2 border-[#a9a9a9] bg-white"><SideTable side="left" /></div>
      <div className="w-[214px] shrink-0 overflow-hidden border-x-2 border-[#a9a9a9] bg-white"><MiddleTable /></div>
      <div className="flex min-w-0 flex-1 border-l-2 border-[#a9a9a9] bg-[#fafafa]">
        <div className="min-w-0 flex-1 overflow-hidden bg-white"><SideTable side="right" /></div>
        <div className="flex w-[30px] flex-col items-center border-l-2 border-[#e6e6e6] pt-[7px] pb-[41px]">
          <div className="w-[16px] flex-1 rounded-full bg-[#7f7f7f]" />
        </div>
      </div>
    </div>
  );
}

function StatusBar() {
  return (
    <div className="flex h-[32px] shrink-0 items-center border-b border-[#cdcdcd] bg-[#ececec] text-[26px] whitespace-nowrap">
      <div className="flex flex-1 items-center justify-center pr-[60px] pl-[20px]">
        <BlankDoc className="mr-[12px] h-[30px] w-[24px]" /><span className="pt-[5px]">16 files</span><span className="ml-[20px] pt-[5px]">(48.0 MB)</span>
      </div>
      <div className="pt-[5px]">Showing 17 of 1 374 items</div>
      <div className="flex flex-1 items-center justify-center pl-[80px]">
        <BlankDoc className="mr-[12px] h-[30px] w-[24px]" /><span className="pt-[5px]">6 files</span><span className="ml-[20px] pt-[5px]">(15.1 MB)</span>
      </div>
    </div>
  );
}

/* ---------- bottom bar ---------- */

function CountButton({ label, count, icon, className }: { label: string; count: string; icon: ReactNode; className: string }) {
  return (
    <button aria-label={`${label}: ${count}`} aria-pressed="true" className={`mt-px flex h-[76px] items-center justify-between border-4 border-[#5b9ef7] bg-white pr-[7px] pl-[4px] shadow-[inset_0_0_0_2px_#1f76ee] ${className}`}>
      {icon}
      <span className="self-end pb-[4px] text-[25px] leading-[30px] font-bold text-black">{count}</span>
    </button>
  );
}

const stats: { label: string; icon: ReactNode; value: string; className: string }[] = [
  { label: "Delete left", icon: <SmallBin />, value: "1", className: "w-[41px] font-bold" },
  { label: "Update left", icon: <Arrow kind="grey" className="h-[32px] w-[32px]" />, value: "0", className: "w-[42px]" },
  { label: "Create left", icon: <Arrow kind="blue" plus small className="h-[32px] w-[32px]" />, value: "1", className: "w-[42px] font-bold" },
  { label: "Data", icon: <Pie />, value: "48.0 MB", className: "w-[128px] font-bold" },
  { label: "Create right", icon: <Arrow plus small className="h-[32px] w-[32px]" />, value: "10", className: "w-[46px] font-bold" },
  { label: "Update right", icon: <Arrow className="h-[32px] w-[32px]" />, value: "5", className: "w-[43px] font-bold" },
  { label: "Delete right", icon: <SmallBin grey />, value: "0", className: "w-[42px]" },
];

function BottomBar() {
  return (
    <div className="flex h-[94px] shrink-0 bg-white">
      <Grip />
      <button aria-label="Log" className={`${BTN} mt-[11px] ml-[6px] h-[68px] w-[68px]`}><Notebook className="h-[60px] w-[62px]" /></button>
      <div className="flex flex-1 items-start justify-center pt-[6px] pr-[8px]">
        <button className={`${BTN} h-[80px] w-[170px] flex-col`}>
          <span className="text-[25px] leading-[32px]">Select view:</span>
          <span className="flex gap-[6px]">
            <span className="flex h-[46px] w-[48px] items-center justify-center bg-[#aeaeae]"><FolderSearch grey className="h-[27px] w-[32px] opacity-60 brightness-150" /></span>
            <span className="flex h-[46px] w-[48px] items-center justify-center bg-[#3f9a38]"><SyncIcon className="h-[32px] w-[32px]" /></span>
          </span>
        </button>
        <CountButton label="Delete left" count="1" icon={<Bin className="h-[62px] w-[62px]" />} className="ml-[24px] w-[106px]" />
        <CountButton label="Create left" count="1" icon={<Arrow kind="blue" plus className="h-[62px] w-[66px]" />} className="ml-[16px] w-[106px]" />
        <button aria-label="Equal: 1 357" className={`${BTN_BASE} ml-[15px] h-[79px] w-[167px] justify-between pr-[14px] pl-[20px]`}>
          <svg viewBox="0 0 40 28" className="h-[28px] w-[40px]"><path d="M0 5H40M0 22H40" stroke="#505050" strokeWidth="10" /></svg>
          <span className="self-end pb-[8px] text-[25px] leading-[30px]">1 357</span>
        </button>
        <CountButton label="Create right" count="10" icon={<Arrow plus className="h-[62px] w-[66px]" />} className="ml-[14px] w-[121px]" />
        <CountButton label="Update right" count="5" icon={<Arrow className="h-[62px] w-[66px]" />} className="ml-[16px] w-[109px]" />
        <button aria-label="View options" className={`${BTN} ml-[14px] h-[79px] w-[36px]`}><Play /></button>
      </div>
      <div className="flex items-center pt-[4px] text-[26px]">Statistics:</div>
      <dl className="mt-[1px] ml-[17px] flex border-t border-l border-[#e4e4e4] pt-[11px] pr-[9px] pl-[4px] shadow-[inset_0_-2px_1px_#d6d6d6]">
        {stats.map((s) => (
          <div key={s.label} className={`flex flex-col items-center whitespace-nowrap ${s.className}`}>
            <dt aria-label={s.label}>{s.icon}</dt>
            <dd className="mt-[5px] leading-[34px]">{s.value}</dd>
          </div>
        ))}
      </dl>
    </div>
  );
}

/* ---------- window ---------- */

export default function App() {
  return (
    <div className="h-screen bg-black">
      <Defs />
      <main className="flex h-full flex-col overflow-hidden rounded-[20px] bg-[#ececec] font-['Inter',sans-serif] text-[25px] leading-[32px] text-[#262626]">
        <header className="relative flex h-[57px] shrink-0 items-center justify-center border-b border-[#cfcfcf] pr-[6px] pb-[2px]">
          <div className="absolute left-[16px] flex gap-[16px]">
            <button aria-label="Close" className="h-[24px] w-[24px] rounded-full border border-[#e0443e] bg-[#ff5f57]" />
            <button aria-label="Minimize" className="h-[24px] w-[24px] rounded-full border border-[#dfa023] bg-[#febc2e]" />
            <button aria-label="Zoom" className="h-[24px] w-[24px] rounded-full border border-[#1dad2b] bg-[#28c840]" />
          </div>
          <TermIcon className="h-[30px] w-[30px]" />
          <h1 className="ml-[9px] text-[26px] font-bold text-[#4a4a4a]">/Users/magnus/Documents/note.ffs_batch</h1>
        </header>
        <div className="flex min-h-0 flex-1">
          <aside className="flex w-[603px] shrink-0 flex-col border-r-2 border-l border-[#a8a8a8]">
            <ConfigPanel />
            <Sash />
            <OverviewPanel />
          </aside>
          <div className="w-[15px] shrink-0 pt-[477px]">
            <Sash />
          </div>
          <div className="flex min-w-0 flex-1 flex-col">
            <Toolbar />
            <Sash line />
            <FolderBar />
            <Sash />
            <FileGrid />
            <StatusBar />
            <Sash />
            <BottomBar />
          </div>
        </div>
      </main>
    </div>
  );
}
